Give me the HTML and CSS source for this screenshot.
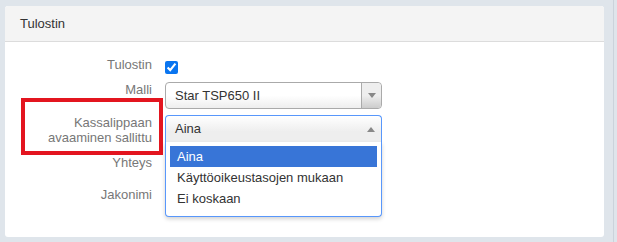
FILE: index.html
```html
<!DOCTYPE html>
<html lang="fi">
<head>
<meta charset="utf-8">
<title>Tulostin</title>
<link rel="stylesheet" href="styles.css">
</head>
<body>
<div class="content">
  <section class="panel">
    <header class="panel-heading">Tulostin</header>
    <div class="panel-body">
      <div class="row row-check">
        <label class="label">Tulostin</label>
        <div class="control"><input class="check" type="checkbox" checked></div>
      </div>
      <div class="row row-select">
        <label class="label">Malli</label>
        <div class="control">
          <div class="select">
            <span class="select-text">Star TSP650 II</span>
            <span class="select-arrow"><b class="tri-down"></b></span>
          </div>
        </div>
      </div>
      <div class="row row-open">
        <label class="label label-two">Kassalippaan<br>avaaminen sallittu</label>
        <div class="control control-open">
          <div class="select select-open">
            <span class="select-text">Aina</span>
            <span class="select-arrow-open"><b class="tri-up"></b></span>
          </div>
          <ul class="dropdown">
            <li class="option option-active">Aina</li>
            <li class="option">Käyttöoikeustasojen mukaan</li>
            <li class="option">Ei koskaan</li>
          </ul>
        </div>
      </div>
      <div class="row row-yhteys">
        <label class="label label-p2">Yhteys</label>
        <div class="control"><div class="field"></div></div>
      </div>
      <div class="row row-jako">
        <label class="label label-p1">Jakonimi</label>
        <div class="control"><div class="field"></div></div>
      </div>
    </div>
    <div class="highlight-box"></div>
  </section>
</div>
<div class="edge"></div>
</body>
</html>
```
FILE: styles.css
```css
* { box-sizing: border-box; }
html, body { margin: 0; padding: 0; }
body {
  width: 617px;
  height: 242px;
  overflow: hidden;
  display: flex;
  background: #dfe5eb;
  font-family: "Liberation Sans", Arial, sans-serif;
  font-size: 13px;
  line-height: 15px;
  color: #333;
}
.content {
  width: 613px;
  flex: none;
  padding: 6px 9px 0 5px;
}
.edge {
  flex: 1;
  border-left: 1px solid #cbd3db;
}
.panel {
  position: relative;
  background: #fff;
  border-radius: 3px;
  height: 231px;
}
.panel-heading {
  background: #f4f4f4;
  border-bottom: 1px solid #dcdcdc;
  border-radius: 3px 3px 0 0;
  padding: 10px 15px 10px 15px;
  height: 36px;
  color: #333;
}
.panel-body {
  padding-top: 15px;
  display: flex;
  flex-direction: column;
}
.row {
  display: flex;
  gap: 13px;
}
.label {
  width: 147px;
  flex: none;
  text-align: right;
  color: #777;
}
.control {
  width: 217px;
  flex: none;
}
.row-check { height: 22px; margin-bottom: 3px; }
.row-select { height: 27px; margin-bottom: 6px; }
.row-open { height: 30px; margin-bottom: 8px; }
.row-yhteys { height: 27px; margin-bottom: 6px; }
.row-jako { height: 27px; }
.label-p2 { padding-top: 2px; }
.label-p1 { padding-top: 1px; }

.check {
  margin: 4px 0 0 0;
  width: 13px;
  height: 13px;
  accent-color: #0a75f0;
}

.select {
  position: relative;
  height: 27px;
  border: 1px solid #aaa;
  border-radius: 4px;
  background: linear-gradient(to bottom, #fff 50%, #eee 100%);
  display: flex;
}
.select-text {
  flex: 1;
  padding-left: 9px;
  line-height: 25px;
  color: #333;
}
.select-arrow {
  width: 20px;
  border-left: 1px solid #aaa;
  border-radius: 0 4px 4px 0;
  background: linear-gradient(to bottom, #eee 50%, #ccc 100%);
  display: flex;
  align-items: center;
  justify-content: center;
}
.tri-down {
  width: 0;
  height: 0;
  border-style: solid;
  border-width: 5px 4px 0 4px;
  border-color: #888 transparent transparent transparent;
}
.select-open {
  border-color: #5897fb;
  border-bottom: none;
  border-radius: 4px 4px 0 0;
  background: linear-gradient(to bottom, #fff 0%, #eee 60%);
}
.select-arrow-open {
  width: 20px;
  display: flex;
  align-items: center;
  justify-content: center;
}
.tri-up {
  width: 0;
  height: 0;
  border-style: solid;
  border-width: 0 4px 5px 4px;
  border-color: transparent transparent #888 transparent;
}
.control-open { position: relative; z-index: 2; }
.dropdown {
  position: absolute;
  left: 0;
  top: 27px;
  width: 217px;
  margin: 0;
  padding: 4px 4px 7px 4px;
  list-style: none;
  background: #fff;
  border: 1px solid #5897fb;
  border-top: none;
  border-radius: 0 0 4px 4px;
  box-shadow: 0 2px 4px rgba(0, 0, 0, 0.18);
}
.option {
  padding: 3px 7px;
  height: 21px;
  color: #333;
}
.option-active {
  background: #3875d7;
  color: #fff;
}
.field {
  height: 27px;
  border: 1px solid #ccc;
  border-radius: 4px;
}
.highlight-box {
  position: absolute;
  left: 16px;
  top: 92px;
  width: 142px;
  height: 57px;
  border: 4px solid #e3151f;
}
```
